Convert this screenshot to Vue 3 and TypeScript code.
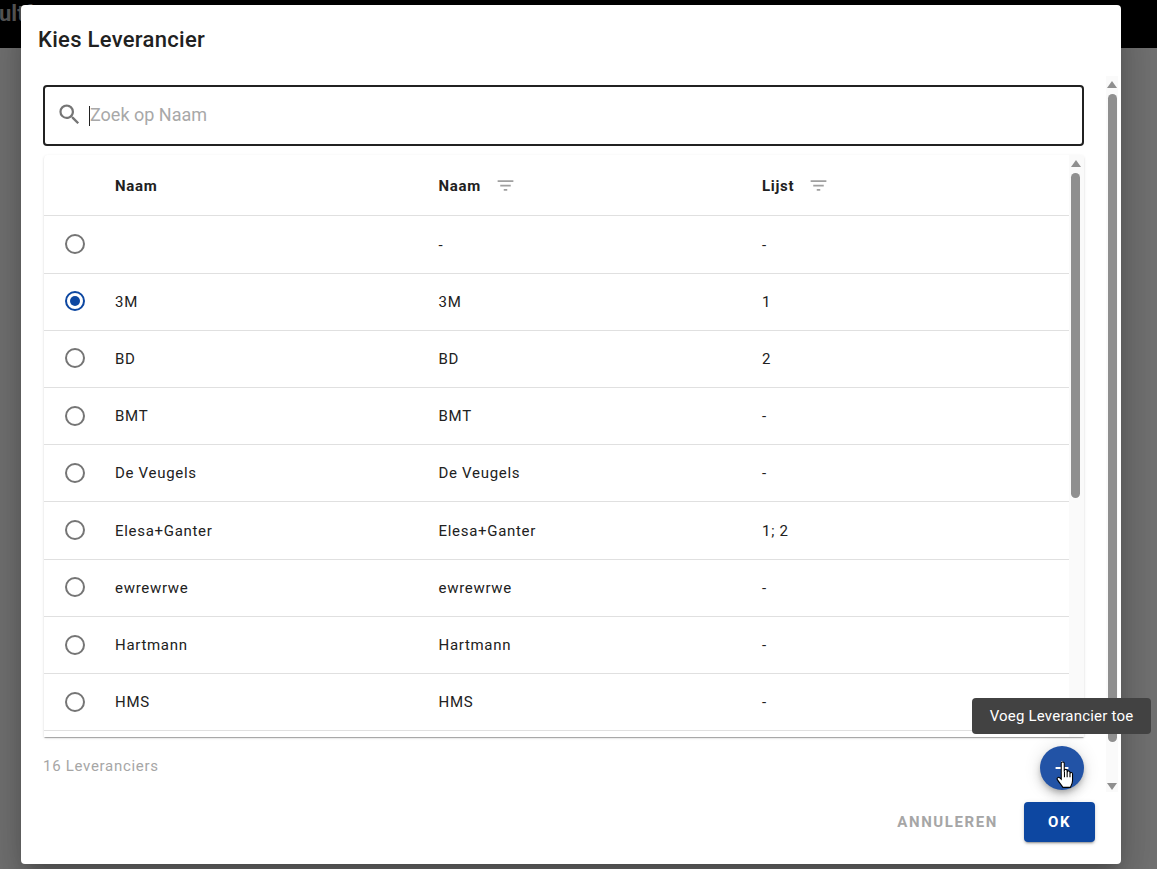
<template>
  <div class="page">
    <header class="appbar"><span class="brand">ultf</span></header>

    <section class="dialog">
      <h1 class="title">Kies Leverancier</h1>

      <div class="content">
        <div class="main">
          <label class="search">
            <svg class="search-icon" viewBox="0 0 24 24"><path :d="icons.search" /></svg>
            <span class="caret"></span>
            <input class="search-input" placeholder="Zoek op Naam" />
          </label>

          <div class="table">
            <div class="table-body">
              <div class="row head">
                <span></span>
                <span class="cell">Naam</span>
                <span class="cell">Naam<svg class="filter" viewBox="0 0 24 24"><path :d="icons.filter" /></svg></span>
                <span class="cell">Lijst<svg class="filter" viewBox="0 0 24 24"><path :d="icons.filter" /></svg></span>
              </div>
              <div v-for="s in suppliers" :key="s.label" class="row">
                <svg class="radio" :class="{ on: s.selected }" viewBox="0 0 24 24">
                  <path :d="icons.radio" />
                  <circle v-if="s.selected" cx="12" cy="12" r="5" />
                </svg>
                <span class="cell">{{ s.name }}</span>
                <span class="cell">{{ s.label }}</span>
                <span class="cell">{{ s.list }}</span>
              </div>
            </div>
            <div class="scrollbar inner">
              <i class="arrow up"></i>
              <i class="thumb"></i>
            </div>
          </div>

          <div class="footer">
            <span class="count">16 Leveranciers</span>
            <button class="fab">
              <svg class="plus" viewBox="0 0 24 24"><path d="M19 13h-6v6h-2v-6H5v-2h6V5h2v6h6z" /></svg>
              <span class="tooltip">Voeg Leverancier toe</span>
              <svg class="hand" viewBox="0 0 18 26">
                <path d="M5.500 2.200c0-1.600 2.800-1.600 2.800 0V10l.2-1.200c0-1.400 2.500-1.400 2.500.2V11l.2-1c.2-1.200 2.400-1 2.400.4V12l.2-.7c.3-1.100 2.200-.8 2.200.7V18c0 3-1 4-2 6.500H7c-1-2-3-4-5-7-1-1.500.5-3 2-2l1.500 1.500Z" />
                <path d="M8.500 10v5M11 11v4M13.600 12v3" />
              </svg>
            </button>
          </div>
        </div>

        <div class="scrollbar outer">
          <i class="arrow up"></i>
          <i class="thumb"></i>
          <i class="arrow down"></i>
        </div>
      </div>

      <div class="actions">
        <button class="btn cancel">Annuleren</button>
        <button class="btn ok">OK</button>
      </div>
    </section>
  </div>
</template>

<script setup lang="ts">
interface Supplier {
  name: string
  label: string
  list: string
  selected?: boolean
}

const icons = {
  search:
    'M9.5,3A6.5,6.5 0 0,1 16,9.5C16,11.11 15.41,12.59 14.44,13.73L14.71,14H15.5L20.5,19L19,20.5L14,15.5V14.71L13.73,14.44C12.59,15.41 11.11,16 9.5,16A6.5,6.5 0 0,1 3,9.5A6.5,6.5 0 0,1 9.5,3M9.5,5C7,5 5,7 5,9.5C5,12 7,14 9.5,14C12,14 14,12 14,9.5C14,7 12,5 9.5,5Z',
  filter: 'M6,13H18V11H6M3,6V8H21V6M10,18H14V16H10V18Z',
  radio:
    'M12,20A8,8 0 0,1 4,12A8,8 0 0,1 12,4A8,8 0 0,1 20,12A8,8 0 0,1 12,20M12,2A10,10 0 0,0 2,12A10,10 0 0,0 12,22A10,10 0 0,0 22,12A10,10 0 0,0 12,2Z',
}

const suppliers: Supplier[] = [
  { name: '', label: '-', list: '-' },
  { name: '3M', label: '3M', list: '1', selected: true },
  { name: 'BD', label: 'BD', list: '2' },
  { name: 'BMT', label: 'BMT', list: '-' },
  { name: 'De Veugels', label: 'De Veugels', list: '-' },
  { name: 'Elesa+Ganter', label: 'Elesa+Ganter', list: '1; 2' },
  { name: 'ewrewrwe', label: 'ewrewrwe', list: '-' },
  { name: 'Hartmann', label: 'Hartmann', list: '-' },
  { name: 'HMS', label: 'HMS', list: '-' },
]
</script>

<style>
html,
body {
  margin: 0;
  overflow: hidden;
}
</style>

<style scoped>
.page {
  position: relative;
  height: 869px;
  overflow: hidden;
  background: #727272;
  font-family: Roboto, 'Liberation Sans', sans-serif;
  color: #212121;
}

.appbar {
  height: 48px;
  background: #000;
  overflow: hidden;
}

.brand {
  display: block;
  margin-left: -1px;
  font-size: 22px;
  font-weight: 700;
  line-height: 28px;
  color: #555;
}

.dialog {
  position: absolute;
  left: 21px;
  top: 5px;
  width: 1100px;
  height: 859px;
  display: flex;
  flex-direction: column;
  background: #fff;
  border-radius: 4px;
  box-shadow: 0 11px 15px -7px rgba(0, 0, 0, 0.2), 0 24px 38px 3px rgba(0, 0, 0, 0.14), 0 9px 46px 8px rgba(0, 0, 0, 0.12);
}

.title {
  margin: 0;
  height: 71px;
  padding: 22px 17px 0;
  box-sizing: border-box;
  font-size: 22px;
  font-weight: 500;
  line-height: 26px;
  letter-spacing: 0.3px;
}

.content {
  flex: 1;
  min-height: 0;
  display: flex;
  padding-right: 3px;
}

.main {
  flex: 1;
  min-width: 0;
  display: flex;
  flex-direction: column;
  padding: 9px 22px 0;
}

.search {
  height: 61px;
  box-sizing: border-box;
  display: flex;
  align-items: center;
  padding-left: 11px;
  border: 2px solid #212121;
  border-radius: 4px;
}

.search-icon {
  width: 27px;
  height: 27px;
  margin: -2px 6px 0 0;
  fill: #757575;
}

.caret {
  width: 1px;
  height: 20px;
  background: #212121;
}

.search-input {
  flex: 1;
  border: 0;
  outline: 0;
  padding: 0;
  margin-top: -2px;
  font: 400 18px Roboto, sans-serif;
  color: #212121;
}

.search-input::placeholder {
  color: #a8a8a8;
  opacity: 1;
}

.table {
  height: 582px;
  margin-top: 9px;
  margin-left: 1px;
  display: flex;
  overflow: hidden;
  background: #fff;
  border-radius: 4px 4px 0 0;
  box-shadow: 0 2px 1px -1px rgba(0, 0, 0, 0.2), 0 1px 1px 0 rgba(0, 0, 0, 0.14), 0 1px 3px 0 rgba(0, 0, 0, 0.12);
}

.table-body {
  flex: 1;
  min-width: 0;
}

.row {
  display: grid;
  grid-template-columns: 55px 323.5px 323.5px 1fr;
  align-items: center;
  height: 57.23px;
  box-sizing: border-box;
  border-bottom: 1px solid #e0e0e0;
  font-size: 15px;
  letter-spacing: 0.7px;
}

.row.head {
  height: 61.4px;
  padding-top: 1px;
  font-weight: 700;
}

.cell {
  display: flex;
  align-items: center;
  padding-left: 16px;
}

.filter {
  width: 21px;
  height: 21px;
  margin-left: 14px;
  fill: #a0a0a0;
}

.radio {
  width: 24px;
  height: 24px;
  margin: -1px 0 0 19px;
  fill: #757575;
}

.radio.on {
  fill: #0d47a1;
}

.footer {
  display: flex;
  justify-content: space-between;
  padding-top: 9px;
}

.count {
  margin-top: 10px;
  font-size: 15px;
  line-height: 20px;
  letter-spacing: 0.7px;
  color: #a6a6a6;
}

.fab {
  position: relative;
  width: 44px;
  height: 44px;
  padding: 11px;
  border: 0;
  border-radius: 50%;
  background: #2253a6;
  box-shadow: 0 3px 5px -1px rgba(0, 0, 0, 0.2), 0 6px 10px 0 rgba(0, 0, 0, 0.14), 0 1px 18px 0 rgba(0, 0, 0, 0.12);
  fill: #fff;
}

.plus {
  display: block;
  width: 22px;
  height: 22px;
}

.tooltip {
  position: absolute;
  left: -68px;
  top: -48px;
  width: 179px;
  height: 36px;
  border-radius: 4px;
  background: #424242;
  color: #fff;
  font: 400 15px/36px Roboto, sans-serif;
  letter-spacing: 0.2px;
  text-align: center;
}

.hand {
  position: absolute;
  left: 15px;
  top: 15px;
  width: 20px;
  height: 28px;
  fill: #fff;
  stroke: #000;
  stroke-width: 1;
}

.scrollbar {
  display: flex;
  flex-direction: column;
  align-items: center;
  background: #fafafa;
}

.scrollbar.outer {
  width: 12px;
  padding-top: 5px;
  box-sizing: border-box;
}

.scrollbar.inner {
  width: 15px;
  padding: 5px 2px 0 0;
  box-sizing: border-box;
}

.arrow {
  width: 0;
  height: 0;
  border-left: 5px solid transparent;
  border-right: 5px solid transparent;
}

.arrow.up {
  border-bottom: 7px solid #8f8f8f;
}

.arrow.down {
  margin-top: 41px;
  border-top: 7px solid #8f8f8f;
}

.thumb {
  width: 9px;
  background: #8f8f8f;
  border-radius: 5px;
}

.outer .thumb {
  height: 648px;
  margin-top: 6px;
}

.inner .thumb {
  height: 325px;
  margin-top: 6px;
}

.actions {
  height: 72px;
  box-sizing: border-box;
  display: flex;
  justify-content: flex-end;
  gap: 15px;
  padding: 10px 26px 0 0;
}

.btn {
  height: 40px;
  border: 0;
  border-radius: 4px;
  font: 700 15px Roboto, sans-serif;
  letter-spacing: 1.6px;
  text-transform: uppercase;
}

.cancel {
  padding: 0 11px;
  background: transparent;
  color: #a6a6a6;
}

.ok {
  width: 71px;
  background: #0d47a1;
  color: #fff;
  box-shadow: 0 3px 1px -2px rgba(0, 0, 0, 0.2), 0 2px 2px 0 rgba(0, 0, 0, 0.14), 0 1px 5px 0 rgba(0, 0, 0, 0.12);
}
</style>
